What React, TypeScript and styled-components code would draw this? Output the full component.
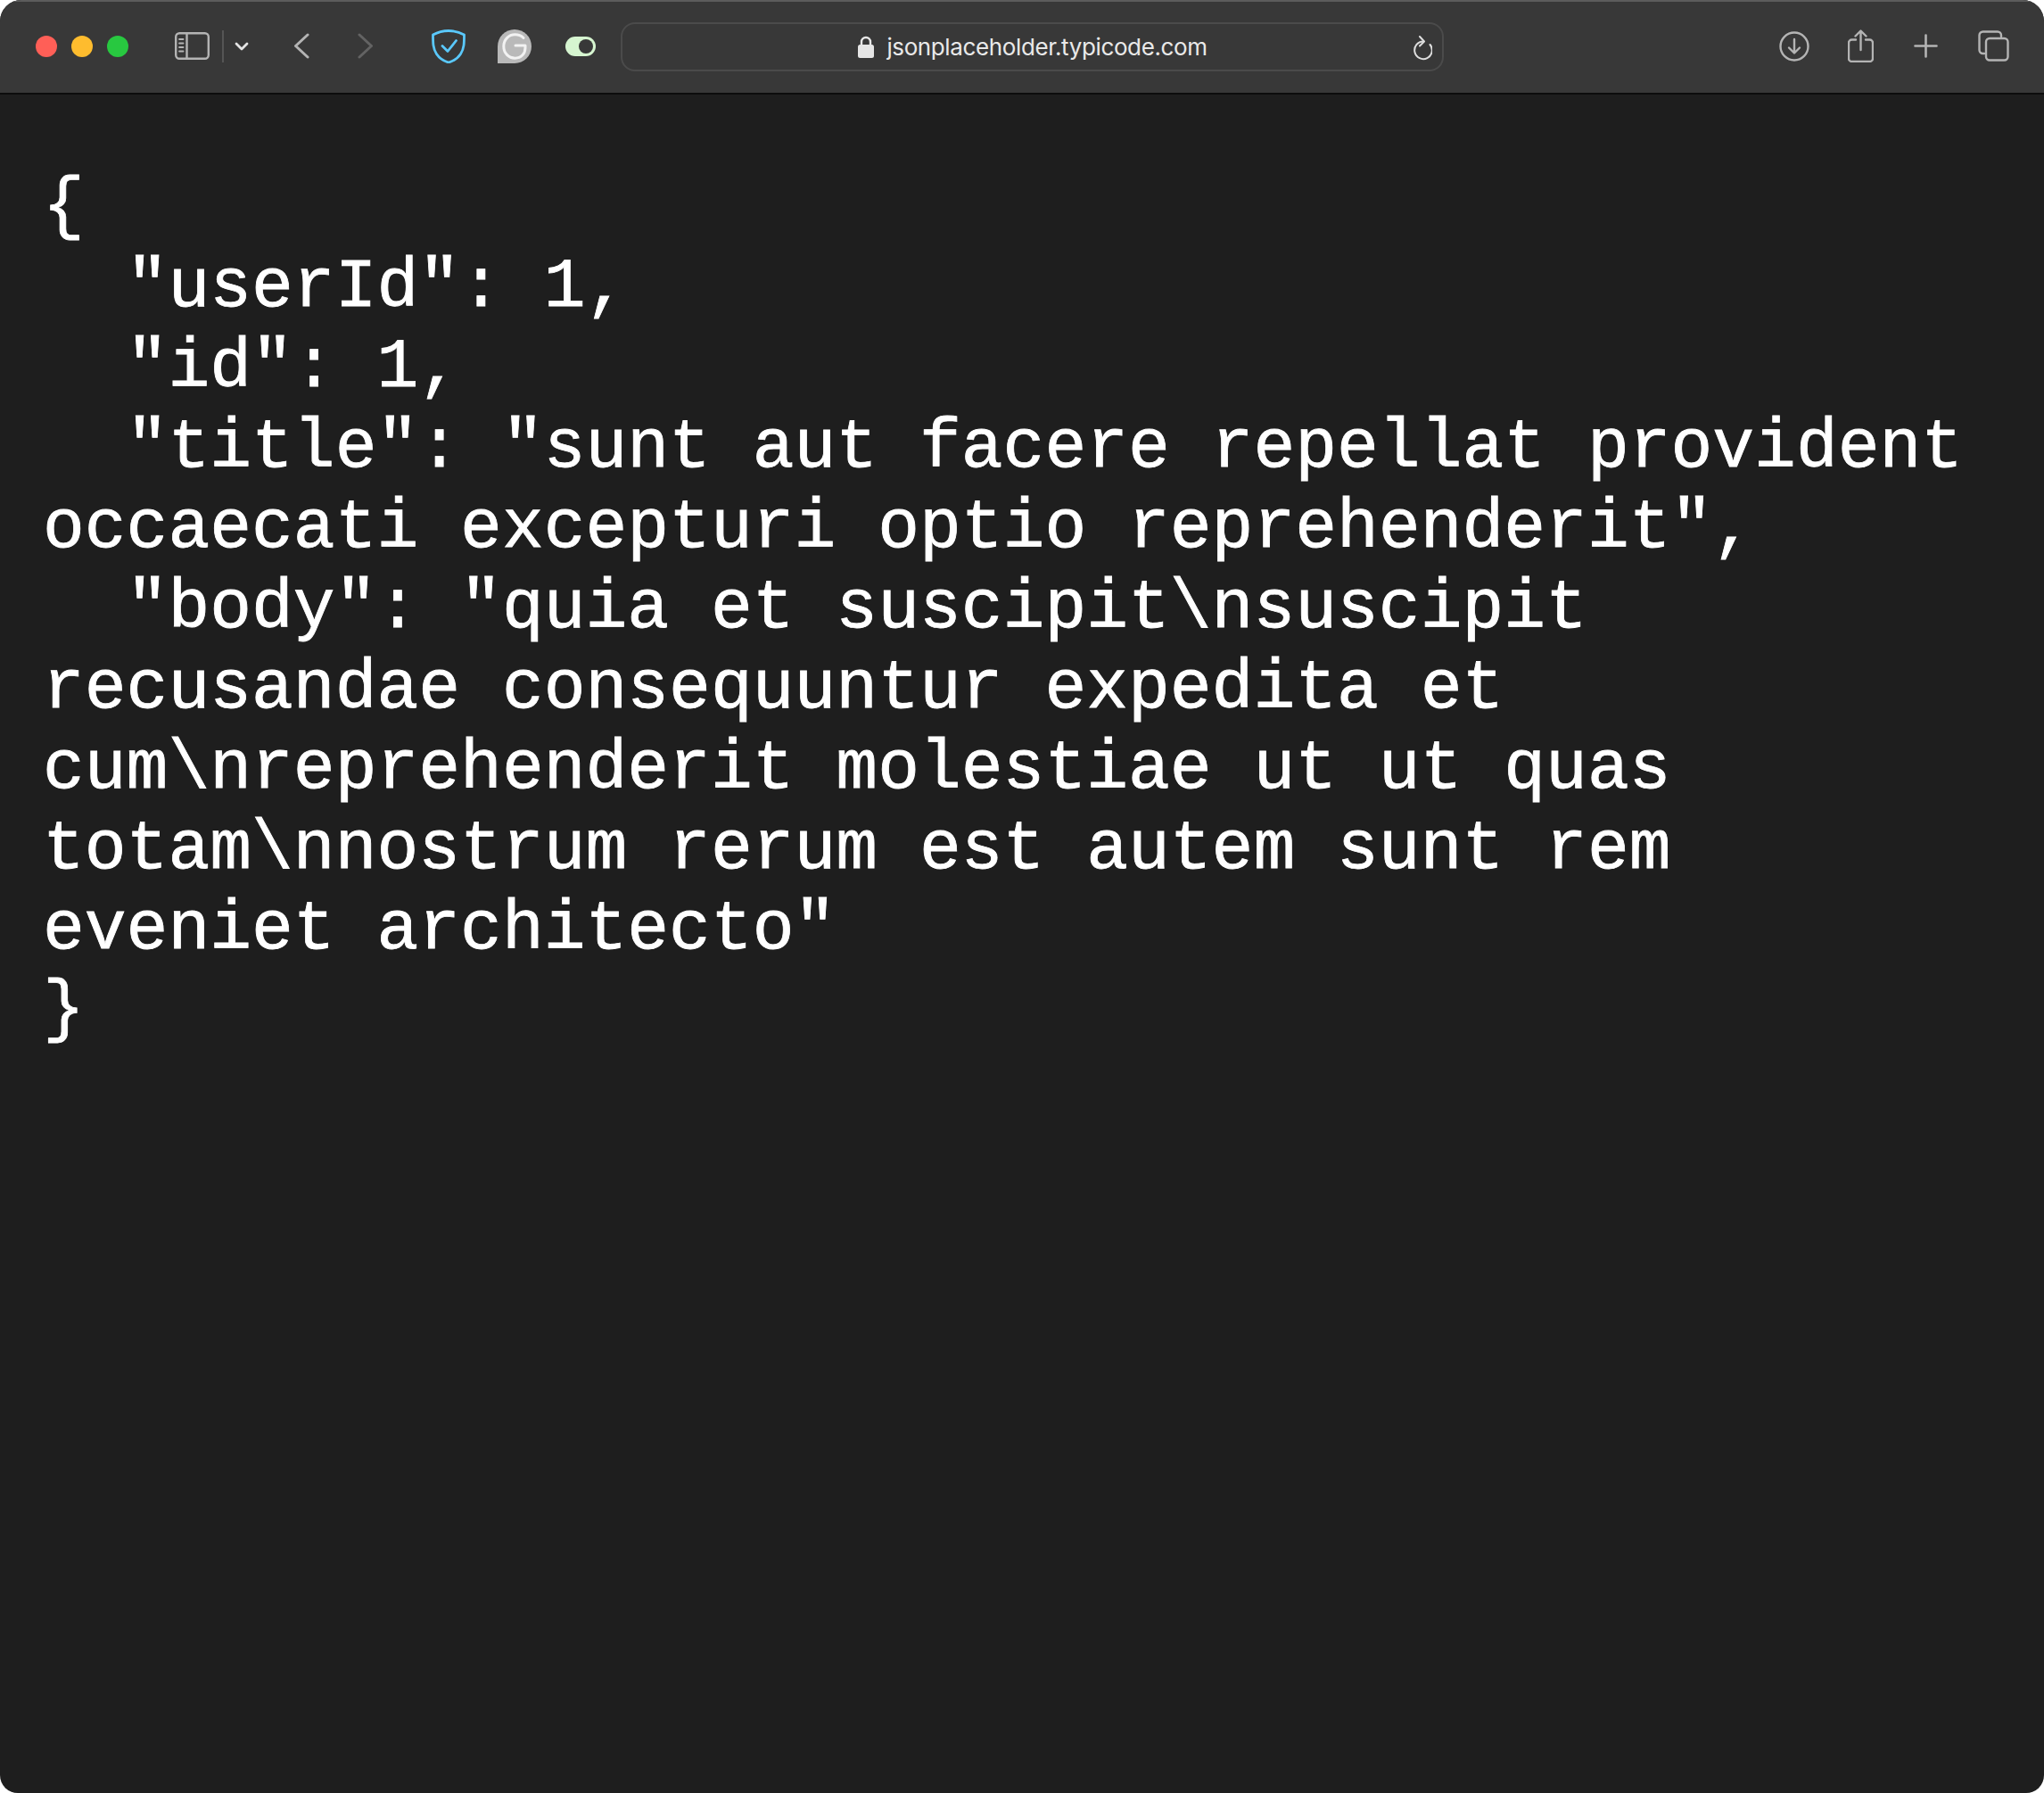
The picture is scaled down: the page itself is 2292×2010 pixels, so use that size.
import React from "react";
import styled, { createGlobalStyle } from "styled-components";

const Global = createGlobalStyle`
  html, body { margin: 0; padding: 0; background: #ffffff; }
  #root { width: 2292px; height: 2010px; overflow: hidden; }
`;

const Win = styled.div`
  width: 2292px;
  height: 2010px;
  display: flex;
  flex-direction: column;
  background: #1e1e1e;
  border-radius: 24px 24px 20px 20px;
  overflow: hidden;
`;

const Toolbar = styled.header`
  flex: none;
  box-sizing: border-box;
  height: 106px;
  padding: 1px 0 0 40px;
  display: flex;
  align-items: center;
  background: #383838;
  border-top: 2px solid #5c5c5c;
  border-bottom: 2px solid #0c0c0c;
`;

const Lights = styled.div`
  display: flex;
  gap: 16px;
  margin-top: -4px;
`;

const Light = styled.span<{ $c: string }>`
  width: 24px;
  height: 24px;
  border-radius: 50%;
  background: ${(p) => p.$c};
`;

const Icon = styled.svg<{ $left: number; $top?: number }>`
  flex: none;
  display: block;
  margin-left: ${(p) => p.$left}px;
  margin-top: ${(p) => p.$top ?? -4}px;
  fill: none;
  stroke-linecap: round;
  stroke-linejoin: round;
`;

const Divider = styled.span`
  flex: none;
  width: 2px;
  height: 36px;
  margin: -4px 0 0 14px;
  background: #555555;
`;

const UrlBar = styled.div`
  flex: none;
  box-sizing: border-box;
  position: relative;
  width: 923px;
  height: 55px;
  margin: -2px 0 0 28px;
  padding-left: 1px;
  display: flex;
  align-items: center;
  justify-content: center;
  gap: 14px;
  border: 2px solid #4b4b4b;
  border-radius: 16px;
`;

const Host = styled.span`
  font-family: Inter, "Liberation Sans", sans-serif;
  font-size: 26px;
  letter-spacing: -0.38px;
  line-height: 32px;
  color: #e9e9e9;
`;

const Reload = styled.svg`
  position: absolute;
  right: 11px;
  top: 13px;
  fill: none;
  stroke-linecap: round;
  stroke-linejoin: round;
`;

const Json = styled.pre`
  margin: 0;
  box-sizing: border-box;
  width: 2292px;
  padding: 81px 70px 0 48px;
  font-family: "Liberation Mono", "Courier New", monospace;
  font-size: 78px;
  line-height: 90px;
  color: #ffffff;
  -webkit-text-stroke: 0.8px #ffffff;
  white-space: pre-wrap;
  word-break: normal;
`;

const GRAY = "#b4b4b4";

const body = `{
  "userId": 1,
  "id": 1,
  "title": "sunt aut facere repellat provident occaecati excepturi optio reprehenderit",
  "body": "quia et suscipit\\nsuscipit recusandae consequuntur expedita et cum\\nreprehenderit molestiae ut ut quas totam\\nnostrum rerum est autem sunt rem eveniet architecto"
}`;

export default function App() {
  return (
    <>
      <Global />
      <Win>
        <Toolbar>
          <Lights>
            <Light $c="#ff5f57" />
            <Light $c="#febc2e" />
            <Light $c="#28c840" />
          </Lights>
          <Icon $left={52} width="39" height="31" viewBox="0 0 39 31">
            <rect x="1.2" y="1.2" width="36.6" height="28.6" rx="4" stroke={GRAY} strokeWidth="2.4" />
            <path d="M13.5 1.5v28" stroke={GRAY} strokeWidth="2.4" />
            <path d="M5 8h4.5M5 12.5h4.5M5 17h4.5M5 21.5h4.5" stroke={GRAY} strokeWidth="1.8" />
          </Icon>
          <Divider />
          <Icon $left={12} width="16" height="10" viewBox="0 0 16 10">
            <path d="M2 2l6 6 6-6" stroke="#e4e4e4" strokeWidth="2.8" />
          </Icon>
          <Icon $left={50} width="18" height="29" viewBox="0 0 18 29">
            <path d="M16 2L2.5 14.5 16 27" stroke={GRAY} strokeWidth="3" />
          </Icon>
          <Icon $left={54} width="18" height="29" viewBox="0 0 18 29">
            <path d="M2 2l13.5 12.5L2 27" stroke="#636363" strokeWidth="3" />
          </Icon>
          <Icon $left={65} width="38" height="38" viewBox="0 0 38 38">
            <path d="M19 1.500C13 1.500 7 3 1.500 6c0 9 0 15.500 4 21.500 3 4.500 8 8 13.500 9.500 5.500-1.500 10.500-5 13.500-9.500 4-6 4-12.500 4-21.500C31 3 25 1.500 19 1.500z" stroke="#5ac8fa" strokeWidth="2.800" />
            <path d="M12 18.500l6 6 9.500-12" stroke="#5ac8fa" strokeWidth="2.800" />
          </Icon>
          <Icon $left={36} width="38" height="38" viewBox="0 0 38 38">
            <path d="M0 38V19C0 8.500 8.500 0 19 0s19 8.500 19 19-8.500 19-19 19z" fill="#b9b9b9" />
            <path d="M29 9.500C26.500 7 23 5.800 19.500 5.800 12.300 5.800 6.800 11.500 6.800 19s5.500 13.200 12.700 13.200c7 0 11.500-5 11.500-12V18H20" stroke="#f2f2f2" strokeWidth="3" />
          </Icon>
          <Icon $left={38} width="34" height="22" viewBox="0 0 34 22">
            <rect width="34" height="22" rx="11" fill="#d6f5d0" />
            <circle cx="23" cy="11" r="8" fill="#383838" />
          </Icon>
          <UrlBar>
            <Icon as="svg" $left={0} $top={0} width="18" height="25" viewBox="0 0 18 25">
              <path d="M4 11V7a5 5 0 0 1 10 0v4" stroke="#e6e6e6" strokeWidth="2.400" />
              <rect x="0" y="10" width="18" height="15" rx="2.500" fill="#e6e6e6" />
            </Icon>
            <Host>jsonplaceholder.typicode.com</Host>
            <Reload width="23" height="28" viewBox="0 0 23 28">
              <path d="M13 6.500A9.800 9.800 0 1 0 20.500 10" stroke="#dddddd" strokeWidth="2" />
              <path d="M9 1l5 5.500-5 5" stroke="#dddddd" strokeWidth="2" />
            </Reload>
          </UrlBar>
          <Icon $left={376} width="34" height="34" viewBox="0 0 34 34">
            <circle cx="17" cy="17" r="15.500" stroke={GRAY} strokeWidth="2.400" />
            <path d="M17 9v15M11 18.500l6 6 6-6" stroke={GRAY} strokeWidth="2.400" />
          </Icon>
          <Icon $left={43} width="29" height="37" viewBox="0 0 29 37">
            <path d="M9 11.500H4.500A3.500 3.500 0 0 0 1 15v17.500A3.500 3.500 0 0 0 4.500 36h20a3.500 3.500 0 0 0 3.500-3.500V15a3.500 3.500 0 0 0-3.500-3.500H20" stroke={GRAY} strokeWidth="2.400" />
            <path d="M14.500 23V2M8.500 7.500l6-6 6 6" stroke={GRAY} strokeWidth="2.400" />
          </Icon>
          <Icon $left={45} width="27" height="27" viewBox="0 0 27 27">
            <path d="M13.500 1.500v24M1.500 13.500h24" stroke={GRAY} strokeWidth="2.600" />
          </Icon>
          <Icon $left={45} width="35" height="35" viewBox="0 0 35 35">
            <path d="M7 26H5.500A4 4 0 0 1 1.500 22V5.500a4 4 0 0 1 4-4H22a4 4 0 0 1 4 4V7" stroke={GRAY} strokeWidth="2.400" />
            <rect x="9" y="9" width="24.500" height="24.500" rx="4" stroke={GRAY} strokeWidth="2.400" />
          </Icon>
        </Toolbar>
        <Json>{body}</Json>
      </Win>
    </>
  );
}
